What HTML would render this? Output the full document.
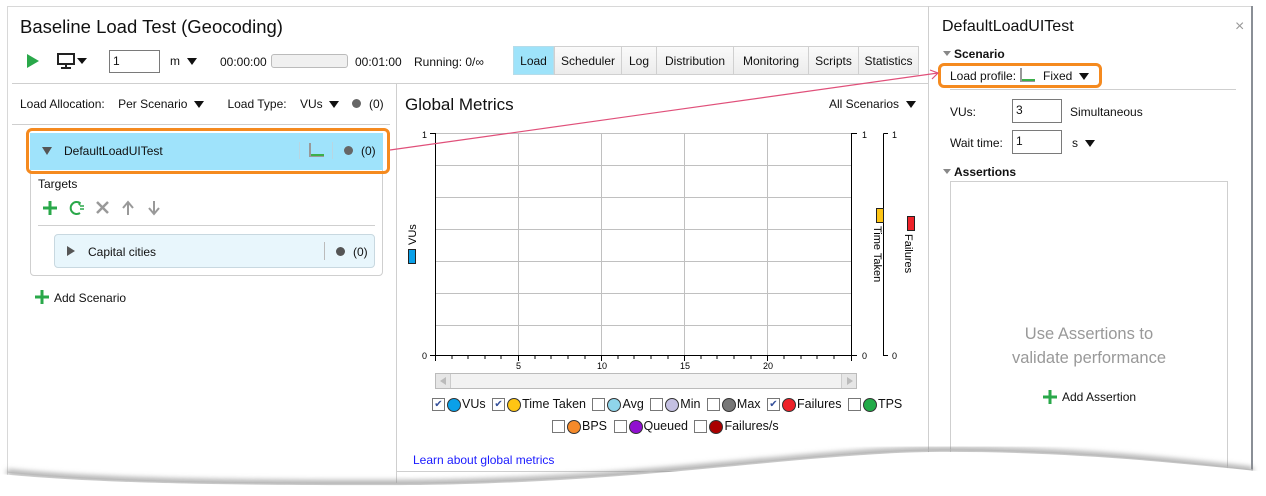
<!DOCTYPE html>
<html><head><meta charset="utf-8"><style>
*{margin:0;padding:0;box-sizing:border-box}
body{width:1266px;height:496px;background:#fff;font-family:"Liberation Sans",sans-serif;font-size:12px;color:#111;position:relative;overflow:hidden}
.a{position:absolute;white-space:nowrap}
.tri{display:inline-block;width:0;height:0;border-left:5px solid transparent;border-right:5px solid transparent;border-top:7px solid #111;vertical-align:middle}
.inp{position:absolute;border:1px solid #7a7a7a;background:#fff;padding:0 3px;font-size:12px;line-height:21px}
.tab{position:absolute;top:46px;height:29px;border:1px solid #d0d0d0;background:linear-gradient(#fafafa,#ececec);font-size:12px;line-height:29px;text-align:center}
.hl{position:absolute;height:1px;background:#cfcfcf}
.vl{position:absolute;width:1px;background:#cfcfcf}
.cb{display:inline-block;width:13px;height:13px;border:1px solid #777;background:#fff;vertical-align:middle;position:relative;font-size:10px;line-height:11px;text-align:center;color:#35509a;margin-left:3px}
.dot{display:inline-block;width:14px;height:14px;border-radius:50%;border:1px solid #333;vertical-align:middle;margin:0 1px 0 2px}
.lg{font-size:12.5px}
</style></head><body>
<div class="hl" style="left:7px;top:6px;width:1246px;background:#d8d8d8"></div>
<div class="vl" style="left:7px;top:6px;height:470px;background:#d8d8d8"></div>
<div class="vl" style="left:1251px;top:6px;height:466px;width:2px;background:#8a8f96"></div>

<div class="a" style="left:20px;top:16px;font-size:18.5px">Baseline Load Test (Geocoding)</div>
<svg class="a" style="left:26px;top:54px" width="14" height="14"><path d="M1 0L13 7L1 14Z" fill="#2aa84a"/></svg>
<svg class="a" style="left:57px;top:53px" width="32" height="16"><rect x="1" y="1" width="16" height="10" fill="none" stroke="#222" stroke-width="2"/><rect x="8" y="11" width="2" height="3" fill="#222"/><rect x="4" y="14" width="10" height="2" fill="#222"/><path d="M20 5L30 5L25 11Z" fill="#111"/></svg>
<div class="inp" style="left:109px;top:50px;width:51px;height:23px">1</div>
<div class="a" style="left:170px;top:54px">m &nbsp;<span class="tri"></span></div>
<div class="a" style="left:220px;top:55px">00:00:00</div>
<div class="a" style="left:271px;top:54px;width:77px;height:14px;border:1px solid #bbb;border-radius:3px;background:#f0f0f0"></div>
<div class="a" style="left:355px;top:55px">00:01:00</div>
<div class="a" style="left:414px;top:55px">Running: 0/∞</div>
<div class="tab" style="left:513px;width:41px;background:#9ee3fa;border-color:#b6dce9">Load</div>
<div class="tab" style="left:554px;width:68px">Scheduler</div>
<div class="tab" style="left:621px;width:36px">Log</div>
<div class="tab" style="left:656px;width:78px">Distribution</div>
<div class="tab" style="left:733px;width:76px">Monitoring</div>
<div class="tab" style="left:808px;width:51px">Scripts</div>
<div class="tab" style="left:858px;width:61px">Statistics</div>
<div class="hl" style="left:12px;top:83px;width:916px"></div>
<div class="vl" style="left:396px;top:83px;height:400px"></div>
<div class="vl" style="left:928px;top:6px;height:470px"></div>

<div class="a" style="left:20px;top:97px">Load Allocation: &nbsp;&nbsp; Per Scenario &nbsp;<span class="tri"></span> &nbsp;&nbsp;&nbsp;&nbsp;&nbsp; Load Type: &nbsp;&nbsp; VUs &nbsp;<span class="tri"></span></div>
<div class="a" style="left:352px;top:99px;width:9px;height:9px;border-radius:50%;background:#666"></div>
<div class="a" style="left:369px;top:97px">(0)</div>
<div class="hl" style="left:12px;top:124px;width:378px"></div>
<div class="a" style="left:30px;top:133px;width:353px;height:143px;border:1px solid #cfcfcf;border-radius:4px"></div>
<div class="a" style="left:30px;top:133px;width:353px;height:37px;background:#9fe3fb"></div>
<div class="a" style="left:26px;top:128px;width:364px;height:46px;border:3px solid #f58a1f;border-radius:6px"></div>
<svg class="a" style="left:42px;top:147px" width="10" height="8"><path d="M0 0L10 0L5 8Z" fill="#555"/></svg>
<div class="a" style="left:64px;top:144px">DefaultLoadUITest</div>
<div class="vl" style="left:299px;top:142px;height:17px;background:#b8d6e2"></div>
<svg class="a" style="left:309px;top:143px" width="16" height="14"><path d="M1 0V13H15" fill="none" stroke="#999" stroke-width="2"/><path d="M2 12H15" stroke="#3cb04a" stroke-width="2"/></svg>
<div class="vl" style="left:332px;top:142px;height:17px;background:#b8d6e2"></div>
<div class="a" style="left:344px;top:146px;width:9px;height:9px;border-radius:50%;background:#666"></div>
<div class="a" style="left:361px;top:144px">(0)</div>
<div class="a" style="left:38px;top:177px">Targets</div>
<svg class="a" style="left:42px;top:200px" width="124" height="16"><path d="M8 1V15M1 8H15" stroke="#2aa84a" stroke-width="3"/><path d="M38 3A6 6 0 1 0 38 13" fill="none" stroke="#2aa84a" stroke-width="2"/><path d="M36 4l3-2-1 4z" fill="#2aa84a"/><path d="M38 6H42M38 9H42" stroke="#2aa84a" stroke-width="1.5"/><path d="M55 2L66 13M66 2L55 13" stroke="#999" stroke-width="2.5"/><path d="M86 15V3M81 8L86 2L91 8" fill="none" stroke="#999" stroke-width="2"/><path d="M112 1V13M107 8L112 14L117 8" fill="none" stroke="#999" stroke-width="2"/></svg>
<div class="hl" style="left:38px;top:225px;width:337px"></div>
<div class="a" style="left:54px;top:234px;width:321px;height:34px;border:1px solid #c8d8e0;border-radius:4px;background:#e8f6fc"></div>
<svg class="a" style="left:67px;top:246px" width="8" height="10"><path d="M0 0L8 5L0 10Z" fill="#555"/></svg>
<div class="a" style="left:88px;top:245px">Capital cities</div>
<div class="vl" style="left:324px;top:242px;height:18px;background:#bbb"></div>
<div class="a" style="left:336px;top:247px;width:9px;height:9px;border-radius:50%;background:#555"></div>
<div class="a" style="left:353px;top:245px">(0)</div>
<svg class="a" style="left:35px;top:290px" width="14" height="14"><path d="M7 0V14M0 7H14" stroke="#2aa84a" stroke-width="3"/></svg>
<div class="a" style="left:54px;top:291px">Add Scenario</div>

<div class="a" style="left:405px;top:95px;font-size:17px">Global Metrics</div>
<div class="a" style="left:829px;top:97px">All Scenarios &nbsp;<span class="tri"></span></div>
<svg class="a" style="left:400px;top:125px" width="528" height="250" font-family="Liberation Sans" font-size="9">
<g stroke="#c0c0c0" stroke-width="1">
<path d="M35.5 8V230M118.5 8V230M201.5 8V230M284.5 8V230M367.5 8V230"/>
<path d="M35 8.5H451M35 40.5H451M35 72.5H451M35 104.5H451M35 136.5H451M35 168.5H451M35 200.5H451"/>
</g>
<path d="M30 8.5H35.5V230.5H451.5V8.5H457M451.5 230.5H457M30 230.5H35M483.5 8.5H488M483.5 8.5V230.5H488" fill="none" stroke="#000"/>
<g stroke="#000"><path d="M35.5 231V236M52 231V234M68 231V234M85 231V234M101 231V234M118.5 231V236M135 231V234M151 231V234M168 231V234M185 231V234M201.5 231V236M218 231V234M234 231V234M251 231V234M268 231V234M284.5 231V236M301 231V234M317 231V234M334 231V234M351 231V234M367.5 231V236M384 231V234M401 231V234M417 231V234M434 231V234M451.5 231V236"/></g>
<g fill="#000"><text x="22" y="13">1</text><text x="22" y="234">0</text><text x="462" y="13">1</text><text x="462" y="234">0</text><text x="492" y="13">1</text><text x="492" y="234">0</text>
<text x="116" y="244">5</text><text x="197" y="244">10</text><text x="280" y="244">15</text><text x="363" y="244">20</text></g>
<rect x="8.5" y="124.5" width="7" height="14" fill="#0aa0e8" stroke="#222"/>
<text transform="translate(16,120) rotate(-90)" font-size="11">VUs</text>
<rect x="476.5" y="83.5" width="7" height="14" fill="#fec514" stroke="#222"/>
<text transform="translate(474,101) rotate(90)" font-size="11">Time Taken</text>
<rect x="507.5" y="91.5" width="7" height="14" fill="#ee2229" stroke="#222"/>
<text transform="translate(505,109) rotate(90)" font-size="11">Failures</text>
</svg>
<div class="a" style="left:435px;top:373px;width:422px;height:16px;border:1px solid #bbb;background:#f2f2f2"></div>
<div class="a" style="left:436px;top:374px;width:15px;height:14px;border-right:1px solid #ccc;background:#e6e6e6"></div>
<div class="a" style="left:841px;top:374px;width:15px;height:14px;border-left:1px solid #ccc;background:#e6e6e6"></div>
<svg class="a" style="left:440px;top:377px" width="6" height="8"><path d="M6 0V8L0 4Z" fill="#bbb"/></svg>
<svg class="a" style="left:847px;top:377px" width="6" height="8"><path d="M0 0V8L6 4Z" fill="#bbb"/></svg>
<div class="a lg" style="left:429px;top:397px"><span class="cb">✔</span><span class="dot" style="background:#0aa0e8"></span>VUs <span class="cb">✔</span><span class="dot" style="background:#fec514"></span>Time Taken <span class="cb"></span><span class="dot" style="background:#8fd4ea"></span>Avg <span class="cb"></span><span class="dot" style="background:#c4c0e2"></span>Min <span class="cb"></span><span class="dot" style="background:#777"></span>Max <span class="cb">✔</span><span class="dot" style="background:#ee2229"></span>Failures <span class="cb"></span><span class="dot" style="background:#22aa48"></span>TPS</div>
<div class="a lg" style="left:549px;top:419px"><span class="cb"></span><span class="dot" style="background:#f58a2a"></span>BPS <span class="cb"></span><span class="dot" style="background:#9010d0"></span>Queued <span class="cb"></span><span class="dot" style="background:#aa0000"></span>Failures/s</div>
<div class="a" style="left:413px;top:453px;color:#1a1aff">Learn about global metrics</div>
<div class="hl" style="left:396px;top:471px;width:532px"></div>

<div class="a" style="left:942px;top:18px;font-size:16px">DefaultLoadUITest</div>
<div class="a" style="left:1235px;top:18px;font-size:16px;color:#999">×</div>
<svg class="a" style="left:943px;top:51px" width="8" height="5"><path d="M0 0H8L4 5Z" fill="#888"/></svg>
<div class="a" style="left:954px;top:47px;font-weight:bold">Scenario</div>
<div class="a" style="left:938px;top:63px;width:164px;height:25px;border:3px solid #f58a1f;border-radius:6px"></div>
<div class="a" style="left:950px;top:69px">Load profile:</div>
<svg class="a" style="left:1020px;top:68px" width="16" height="14"><path d="M1 0V13H15" fill="none" stroke="#999" stroke-width="2"/><path d="M2 12H15" stroke="#3cb04a" stroke-width="2"/></svg>
<div class="a" style="left:1043px;top:69px">Fixed &nbsp;<span class="tri"></span></div>
<div class="hl" style="left:950px;top:89px;width:286px"></div>
<div class="a" style="left:950px;top:105px">VUs:</div>
<div class="inp" style="left:1012px;top:99px;width:50px;height:24px">3</div>
<div class="a" style="left:1070px;top:105px">Simultaneous</div>
<div class="a" style="left:950px;top:136px">Wait time:</div>
<div class="inp" style="left:1012px;top:130px;width:50px;height:24px">1</div>
<div class="a" style="left:1072px;top:136px">s &nbsp;<span class="tri"></span></div>
<svg class="a" style="left:943px;top:169px" width="8" height="5"><path d="M0 0H8L4 5Z" fill="#888"/></svg>
<div class="a" style="left:954px;top:165px;font-weight:bold">Assertions</div>
<div class="a" style="left:950px;top:181px;width:278px;height:300px;border:1px solid #cfcfcf"></div>
<div class="a" style="left:950px;top:322px;width:278px;text-align:center;font-size:16.5px;color:#999;line-height:24px;white-space:normal">Use Assertions to<br>validate performance</div>
<svg class="a" style="left:1043px;top:390px" width="14" height="14"><path d="M7 0V14M0 7H14" stroke="#2aa84a" stroke-width="3"/></svg>
<div class="a" style="left:1062px;top:390px">Add Assertion</div>

<svg class="a" style="left:0;top:0" width="1266" height="496">
<path d="M390 150L938 73" stroke="#e0507a" stroke-width="1.2" fill="none"/>
<path d="M930 70L938 73L932 79" stroke="#e0507a" stroke-width="1.2" fill="none"/>
<defs><filter id="b"><feGaussianBlur stdDeviation="3"/></filter></defs>
<path d="M7 472C80 480 200 484 420 483C650 480 800 452 930 450C1050 449 1150 458 1253 470" stroke="#888" stroke-width="4" fill="none" filter="url(#b)"/>
<path d="M0 474C80 482 200 486 420 485C650 482 800 454 930 452C1050 451 1150 460 1266 472V496H0Z" fill="#fff"/>
<path d="M7 472C80 480 200 484 420 483C650 480 800 452 930 450C1050 449 1150 458 1253 470" stroke="#bbb" stroke-width="1" fill="none"/>
</svg>
</body></html>
